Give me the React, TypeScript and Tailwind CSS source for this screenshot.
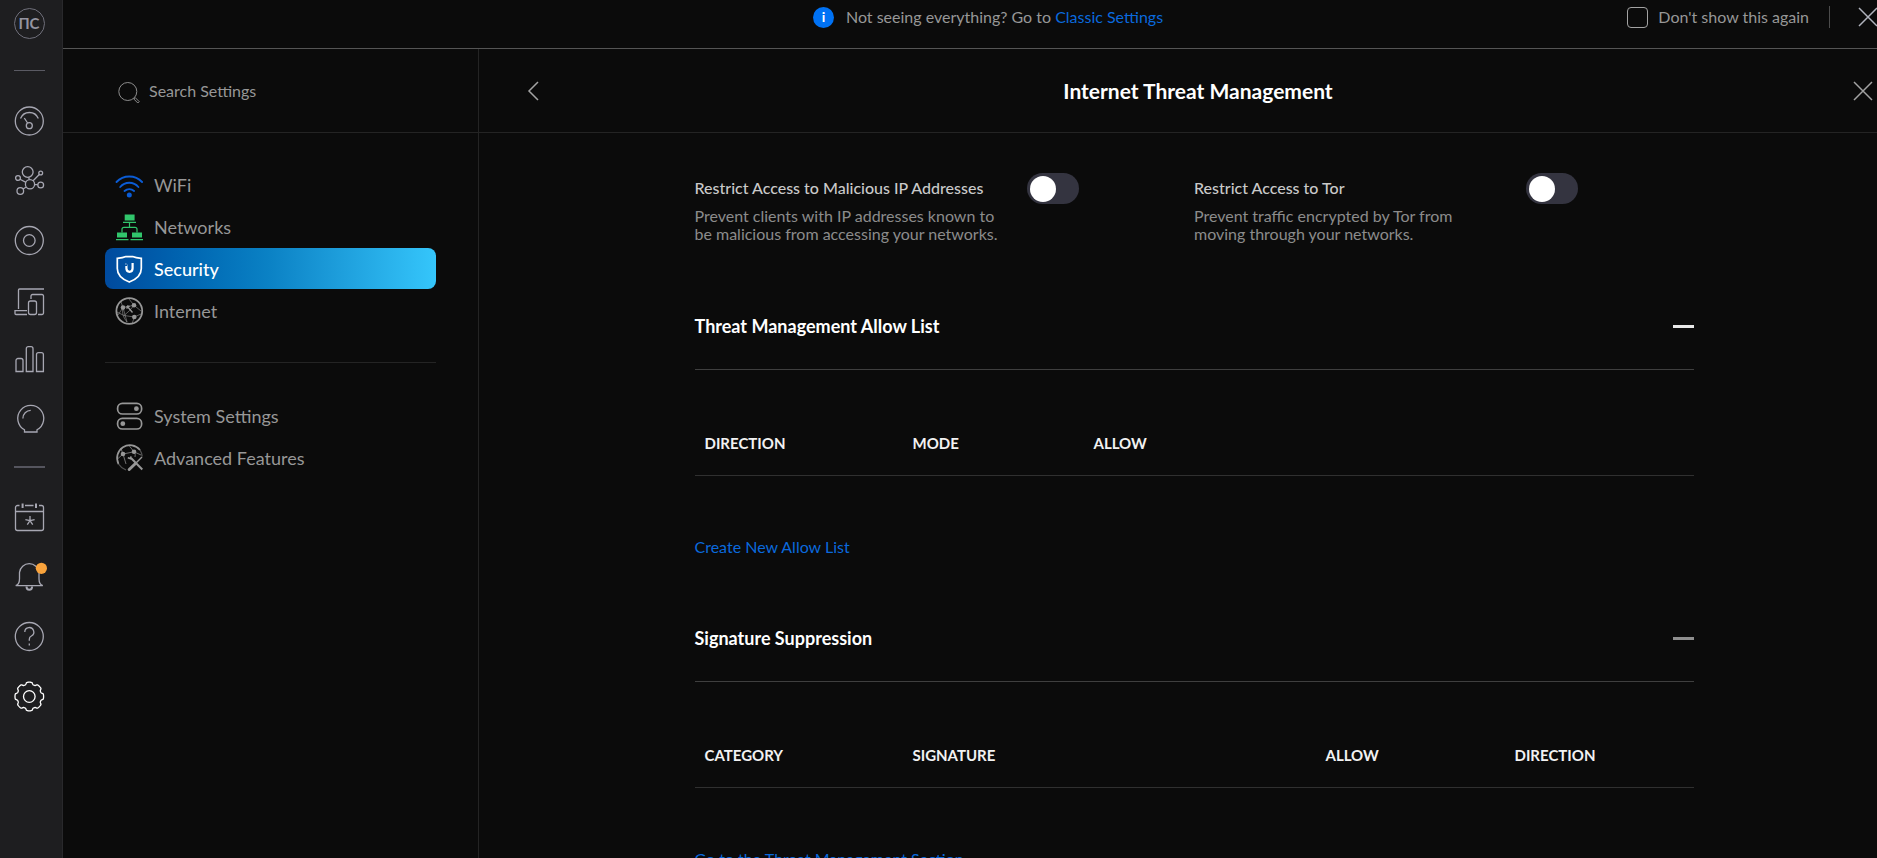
import React, { useState } from 'react';
import clsx from 'clsx';

interface IconProps {
  className?: string;
  children: React.ReactNode;
}

const RailIcon: React.FC<IconProps> = ({ className, children }) => (
  <svg
    viewBox="0 0 30 30"
    fill="none"
    stroke="currentColor"
    strokeWidth="1.3"
    aria-hidden="true"
    className={clsx('size-[30px] overflow-visible', className)}
  >
    {children}
  </svg>
);

const NavIcon: React.FC<IconProps> = ({ className, children }) => (
  <svg
    viewBox="0 0 28 28"
    fill="none"
    stroke="currentColor"
    aria-hidden="true"
    className={clsx('size-7 shrink-0 overflow-visible', className)}
  >
    {children}
  </svg>
);

// scalloped outline with eight flat teeth
const gearPath = Array.from({ length: 144 }, (_, i) => {
  const angle = (i / 144) * Math.PI * 2;
  const radius = 13.2 + 1.1 * Math.tanh(2.5 * (Math.cos(angle * 8) + 0.4));
  const x = 15.3 + radius * Math.cos(angle);
  const y = 14.5 + radius * Math.sin(angle);
  return `${i ? 'L' : 'M'}${x.toFixed(2)} ${y.toFixed(2)}`;
}).join('') + 'Z';

const topItems = [
  {
    label: 'Dashboard',
    icon: (
      <>
        <circle cx="15.3" cy="15" r="14" />
        <path d="M6.5 12.5a9.6 9.6 0 0 1 17.8 0M10.3 12l3.3 5" />
        <circle cx="15.3" cy="19.7" r="3" />
      </>
    ),
  },
  {
    label: 'Topology',
    icon: (
      <>
        <circle cx="13.7" cy="6" r="5.4" />
        <circle cx="16" cy="18.3" r="4.6" />
        <circle cx="4" cy="12" r="2.4" />
        <circle cx="26.7" cy="7" r="1.9" />
        <circle cx="26.7" cy="19" r="2.9" />
        <circle cx="6.3" cy="25" r="3.3" />
        <path d="M14.8 11.3l.4 2.4M6 13.2l6 3.2M25.3 8.5l-6.2 6.3M20.6 18.6h3.2M9 23l3.3-2" />
      </>
    ),
  },
  {
    label: 'Devices',
    icon: (
      <>
        <circle cx="15.3" cy="14.5" r="14" />
        <circle cx="15.3" cy="14.5" r="5.8" />
      </>
    ),
  },
  {
    label: 'Clients',
    icon: (
      <>
        <path d="M30 3H5.5a1 1 0 0 0-1 1V23M13 24.6H1V27.5a1 1 0 0 0 1 1h11" />
        <path d="M17 13v-3a1.5 1.5 0 0 1 1.5-1.5h9.5a1.5 1.5 0 0 1 1.5 1.5v17a1.5 1.5 0 0 1-1.5 1.5h-4" />
        <rect x="14.5" y="15" width="8" height="13.5" rx="2" />
      </>
    ),
  },
  {
    label: 'Statistics',
    icon: (
      <>
        <path d="M2 25.5V14.5a2 2 0 0 1 2-2h3a2 2 0 0 1 2 2v11z" />
        <path d="M12.3 25.5V2.7a2 2 0 0 1 2-2h2.7a2 2 0 0 1 2 2v22.8z" />
        <path d="M22.5 25.5V8.6a2 2 0 0 1 2-2h2.9a2 2 0 0 1 2 2v16.9z" />
      </>
    ),
  },
  {
    label: 'Insights',
    icon: (
      <>
        <path d="M10.5 26h12.5v-2.2A13 13 0 1 0 10.5 23.8z" />
        <path d="M8.9 12.4a8 8 0 0 1 7.8-8" />
      </>
    ),
  },
];

const bottomItems = [
  {
    label: 'Events',
    icon: (
      <>
        <path d="M5.5 3.5h-2a2 2 0 0 0-2 2v21a2 2 0 0 0 2 2h24a2 2 0 0 0 2-2v-21a2 2 0 0 0-2-2h-2.5M11 3.5h8.5M1.5 9.5h28" />
        <path d="M8.6 1.5v4.5M22 1.5v4.5" strokeWidth="2" />
        <path d="M16 14v4.7M16 18.7l-4.6-1M16 18.7l4.6-1M16 18.7l-2.7 4M16 18.7l2.7 4" />
      </>
    ),
  },
  {
    label: 'Notifications',
    icon: (
      <>
        <path d="M1.7 23.7c2.8-1 3.8-3.2 3.8-7V10.5a9.8 9.8 0 0 1 19.5 0v6.2c0 3.8 1 6 3.8 7z" />
        <path d="M12.5 24.5a2.8 3.2 0 0 0 5.6 0" strokeWidth="2" />
        <circle cx="27.4" cy="6.3" r="5.6" fill="#f9a33c" stroke="none" />
      </>
    ),
  },
  {
    label: 'Help',
    icon: (
      <>
        <circle cx="15.3" cy="14.5" r="14" />
        <path d="M10.8 10a4.5 4.5 0 1 1 6.6 4c-1.5.8-2.1 1.6-2.1 3.2v1.6M15.3 21.5v2" />
      </>
    ),
  },
];

const globe = (
  <g strokeWidth="0.8" opacity="0.75">
    <path d="M8 10.5L19 8.3L26 14M8 10.5L3 18M8 10.5L12 25M19.3 20L9 18.5L2 15M19.3 20L26 17M19.3 20L17 27M8 10.5L6 5M19 8.3L14 2M12 25Q6 18 8 10.5M19 8.3Q15 14 9 18.5" />
  </g>
);

const mainNav = [
  {
    label: 'WiFi',
    icon: (
      <NavIcon className="text-[#0b5cd5]">
        <path d="M1.5 11a17.5 17.5 0 0 1 25.6 0M5.2 16a12 12 0 0 1 18.2 0M9.5 20a7.5 7.5 0 0 1 9.6 0" strokeWidth="1.9" strokeLinecap="round" />
        <circle cx="14.3" cy="24" r="2.5" fill="currentColor" stroke="none" />
      </NavIcon>
    ),
  },
  {
    label: 'Networks',
    icon: (
      <NavIcon className="text-[#31c66c]">
        <path d="M9.7 1.5h9.9v6H9.7zM2 19.5h10v5H2zM17 19.5h10v5H17z" fill="currentColor" stroke="none" />
        <path d="M8 9.4h13M1 26.7h12.5M15.5 26.7H28M14.5 9.4v5M7 19.5v-3.2a2 2 0 0 1 2-2h11a2 2 0 0 1 2 2v3.2" strokeWidth="1.2" />
      </NavIcon>
    ),
  },
  {
    label: 'Security',
    icon: (
      <NavIcon>
        <path d="M2.3 3.3Q8 3 11 1.6H17.6Q20.6 3 26.3 3.3V13.5C26.3 20 21 24.5 14.3 27C7.6 24.5 2.3 20 2.3 13.5Z" strokeWidth="1.7" />
        <path d="M11.4 11v2.3q0 3.5 3.2 3.5q3 0 3-3.5V8" strokeWidth="2.2" />
        <path d="M10.4 8.5h1v1h-1zM12.2 9.8h.8v.8h-.8z" fill="currentColor" stroke="none" />
      </NavIcon>
    ),
  },
  {
    label: 'Internet',
    icon: (
      <NavIcon>
        <circle cx="14.3" cy="14" r="12.9" strokeWidth="1.8" />
        {globe}
        <path d="M12 9l5.5 6.5M12 9v2.8M12 9l2.7.3" strokeWidth="1.3" />
        <g fill="currentColor" stroke="none">
          <circle cx="8" cy="10.5" r="2.3" />
          <circle cx="19" cy="8.3" r="2.3" />
          <circle cx="19.3" cy="20" r="2.3" />
        </g>
      </NavIcon>
    ),
  },
];

const systemNav = [
  {
    label: 'System Settings',
    icon: (
      <NavIcon>
        <rect x="2.6" y="1.4" width="24" height="10.6" rx="4.8" strokeWidth="1.7" />
        <rect x="2.6" y="16.4" width="24" height="10.6" rx="4.8" strokeWidth="1.7" />
        <circle cx="21.4" cy="6.7" r="2.4" fill="currentColor" stroke="none" />
        <circle cx="7.8" cy="21.7" r="2.4" fill="currentColor" stroke="none" />
      </NavIcon>
    ),
  },
  {
    label: 'Advanced Features',
    icon: (
      <NavIcon>
        <path d="M3.5 20A12.9 12.9 0 0 1 25 6" strokeWidth="1.7" />
        <path d="M25 6q2 3 2.2 6.5M3.5 20q2.5 4 7.5 6" strokeWidth="1.3" opacity="0.5" />
        <path d="M8 10L19 7.8L26 11M8 10L2.5 15M8 10L11 20M8 10L6 4.5M19 7.8L14 1.5M19 7.8Q21 11 20 13" strokeWidth="0.9" opacity="0.8" />
        <circle cx="8" cy="10" r="2.3" fill="currentColor" stroke="none" />
        <circle cx="19" cy="7.8" r="2.3" fill="currentColor" stroke="none" />
        <path d="M16 14l11.3 11.5" strokeWidth="2" />
        <path d="M12.8 13.7l2.8.9.4-2.3" strokeWidth="1.6" />
        <path d="M27 13l-6.5 6.5" strokeWidth="1.5" />
        <path d="M20.5 19.5l-6.3 6" strokeWidth="3" strokeLinecap="round" />
      </NavIcon>
    ),
  },
];

const CloseIcon: React.FC<{ className?: string }> = ({ className }) => (
  <svg viewBox="0 0 20 20" fill="none" stroke="currentColor" strokeWidth="1.5" aria-hidden="true" className={clsx('size-5', className)}>
    <path d="M1 1l18 18M19 1L1 19" />
  </svg>
);

const NavLink: React.FC<{ label: string; icon: React.ReactNode; active?: boolean }> = ({ label, icon, active }) => (
  <a
    href="#"
    aria-current={active ? 'page' : undefined}
    className={clsx(
      'flex h-[41px] items-center gap-[11px] rounded-lg pl-2.5 text-lg',
      active
        ? 'bg-linear-to-r from-[#004a9e] via-[#0b82c5] to-[#35c6fb] font-medium text-white'
        : 'text-[#979797]'
    )}
  >
    {icon}
    {label}
  </a>
);

const RestrictToggle: React.FC<{ id: string; title: string; description: string }> = ({ id, title, description }) => {
  const [enabled, setEnabled] = useState(false);

  return (
    <div className="flex items-start">
      <div className="w-[332px] pt-1.5">
        <label htmlFor={id} className="block text-base leading-[18px] font-medium text-[#c9c9c9]">
          {title}
        </label>
        <p className="mt-2.5 w-[308px] text-base leading-[18px] text-[#8b8b8b]">{description}</p>
      </div>
      <input
        id={id}
        type="checkbox"
        role="switch"
        checked={enabled}
        onChange={(e) => setEnabled(e.target.checked)}
        className="h-[31px] w-[52px] shrink-0 cursor-pointer appearance-none rounded-full bg-[#343440] p-[3px] before:block before:size-[26px] before:rounded-full before:bg-white before:transition-transform checked:bg-[#006fff] checked:before:translate-x-5"
      />
    </div>
  );
};

interface SectionProps {
  title: string;
  columns: { name: string; width: string }[];
  link: string;
  muted?: boolean;
}

const Section: React.FC<SectionProps> = ({ title, columns, link, muted }) => {
  const [open, setOpen] = useState(true);

  return (
    <section>
      <h2 className="border-b border-[#3f3f3f]">
        <button
          type="button"
          aria-expanded={open}
          onClick={() => setOpen(!open)}
          className="flex h-[86px] w-full items-center justify-between text-left text-lg font-bold text-white"
        >
          {title}
          <span className={clsx('h-[3px] w-[21px]', muted ? 'bg-[#8f8f8f]' : 'bg-[#e8e8e8]')} />
        </button>
      </h2>
      {open && (
        <div className="h-[225px] pt-[41px]">
          <table className="w-full table-fixed">
            <thead>
              <tr className="h-16 border-b border-[#303030]">
                {columns.map((column) => (
                  <th key={column.name} scope="col" className={clsx('pl-2.5 text-left text-[15px] font-bold text-[#f2f2f2]', column.width)}>
                    {column.name}
                  </th>
                ))}
              </tr>
            </thead>
          </table>
          <a href="#" className="mt-[59px] inline-block text-base leading-6 text-[#0a69dd]">
            {link}
          </a>
        </div>
      )}
    </section>
  );
};

export default function App() {
  const [hideBanner, setHideBanner] = useState(false);

  return (
    <div className="flex h-screen overflow-hidden bg-[#0b0b0b] font-['Lato',sans-serif] text-[#979797]">
      <nav aria-label="Main" className="flex w-[63px] shrink-0 flex-col items-center border-r border-[#29292c] bg-[#1e1e20] pt-2 pr-1 text-[#a7a7b2]">
        <button type="button" className="flex size-[31px] items-center justify-center rounded-full border border-[#6f6f7a] text-[15px] font-bold text-[#9494a0]">
          ПС
        </button>
        <div className="mt-[31px] h-px w-[31px] bg-[#5a5a63]" />
        <div className="mt-5 flex flex-col">
          {topItems.map((item) => (
            <a key={item.label} href="#" aria-label={item.label} className="flex h-[60px] items-center">
              <RailIcon>{item.icon}</RailIcon>
            </a>
          ))}
        </div>
        <div className="mt-[15px] h-0.5 w-[31px] bg-[#55555e]" />
        <div className="mt-[19px] flex flex-col">
          {bottomItems.map((item) => (
            <a key={item.label} href="#" aria-label={item.label} className="flex h-[60px] items-center">
              <RailIcon>{item.icon}</RailIcon>
            </a>
          ))}
          <a href="#" aria-label="Settings" className="flex h-[60px] items-center text-white">
            <RailIcon>
              <path d={gearPath} strokeLinejoin="round" />
              <circle cx="15.3" cy="14.5" r="5.8" />
            </RailIcon>
          </a>
        </div>
      </nav>

      {/* the settings panel runs a little past the right edge */}
      <div className="-mr-8 flex flex-1 flex-col">
        <div className="grid h-[49px] shrink-0 grid-cols-[1fr_auto_1fr] border-b border-[#555555] pb-3.5 pl-1 text-base">
          <div className="col-start-2 flex items-center">
            <span className="mr-3 flex size-[21px] items-center justify-center rounded-full bg-[#0072f5] text-sm font-bold text-white">i</span>
            <p>
              Not seeing everything? Go to{' '}
              <a href="#" className="text-[#0a69dd]">
                Classic Settings
              </a>
            </p>
          </div>
          <div className="flex items-center justify-end pr-[31px]">
            <label className="flex items-center gap-2.5">
              <input
                type="checkbox"
                checked={hideBanner}
                onChange={(e) => setHideBanner(e.target.checked)}
                className="size-[21px] appearance-none rounded-sm border border-[#a3a3a3] checked:bg-[#006fff]"
              />
              Don't show this again
            </label>
            <span className="mx-5 h-[22px] w-px bg-[#4c4c4c]" />
            <button type="button" aria-label="Dismiss" className="ml-2 text-[#b0b3bd]">
              <CloseIcon />
            </button>
          </div>
        </div>

        <div className="flex flex-1">
          <aside className="w-[416px] shrink-0 border-r border-[#242424]">
            <div className="flex h-[84px] items-center border-b border-[#242424] pl-[55px]">
              <svg viewBox="0 0 22 22" fill="none" stroke="#8c8c8c" aria-hidden="true" className="mt-1 size-[22px]">
                <circle cx="9.8" cy="9.5" r="9" />
                <path d="M15.8 17l1.4-1.4 4 4-1.4 1.4z" />
              </svg>
              <input
                type="text"
                aria-label="Search Settings"
                placeholder="Search Settings"
                className="ml-[9px] w-60 bg-transparent text-base outline-none placeholder:text-[#979797]"
              />
            </div>
            <nav aria-label="Settings" className="mx-[42px] pt-[31px]">
              <div className="flex flex-col gap-px border-b border-[#242424] pb-[31px]">
                {mainNav.map((item) => (
                  <NavLink key={item.label} label={item.label} icon={item.icon} active={item.label === 'Security'} />
                ))}
              </div>
              <div className="flex flex-col gap-px pt-8">
                {systemNav.map((item) => (
                  <NavLink key={item.label} label={item.label} icon={item.icon} />
                ))}
              </div>
            </nav>
          </aside>

          <main className="min-w-0 flex-1">
            <header className="flex h-[84px] items-center gap-4 border-b border-[#242424] pr-9 pl-12">
              <button type="button" aria-label="Back" className="text-[#a3a3a3]">
                <svg viewBox="0 0 12 20" fill="none" stroke="currentColor" strokeWidth="1.5" aria-hidden="true" className="h-5 w-3">
                  <path d="M11 1L2 10l9 9" />
                </svg>
              </button>
              <h1 className="flex-1 pl-1 text-center text-[21px] font-bold text-white">Internet Threat Management</h1>
              <button type="button" aria-label="Close" className="text-[#a3a3a3]">
                <CloseIcon />
              </button>
            </header>

            <div className="mx-auto max-w-[999px] pt-10">
              <div className="grid grid-cols-2 pb-10">
                <RestrictToggle
                  id="restrict-ip"
                  title="Restrict Access to Malicious IP Addresses"
                  description="Prevent clients with IP addresses known to be malicious from accessing your networks."
                />
                <RestrictToggle
                  id="restrict-tor"
                  title="Restrict Access to Tor"
                  description="Prevent traffic encrypted by Tor from moving through your networks."
                />
              </div>
              <Section
                title="Threat Management Allow List"
                columns={[
                  { name: 'DIRECTION', width: 'w-[208px]' },
                  { name: 'MODE', width: 'w-[181px]' },
                  { name: 'ALLOW', width: 'w-auto' },
                ]}
                link="Create New Allow List"
              />
              <Section
                title="Signature Suppression"
                columns={[
                  { name: 'CATEGORY', width: 'w-[208px]' },
                  { name: 'SIGNATURE', width: 'w-[413px]' },
                  { name: 'ALLOW', width: 'w-[189px]' },
                  { name: 'DIRECTION', width: 'w-auto' },
                ]}
                link="Go to the Threat Management Section"
                muted
              />
            </div>
          </main>
        </div>
      </div>
    </div>
  );
}
